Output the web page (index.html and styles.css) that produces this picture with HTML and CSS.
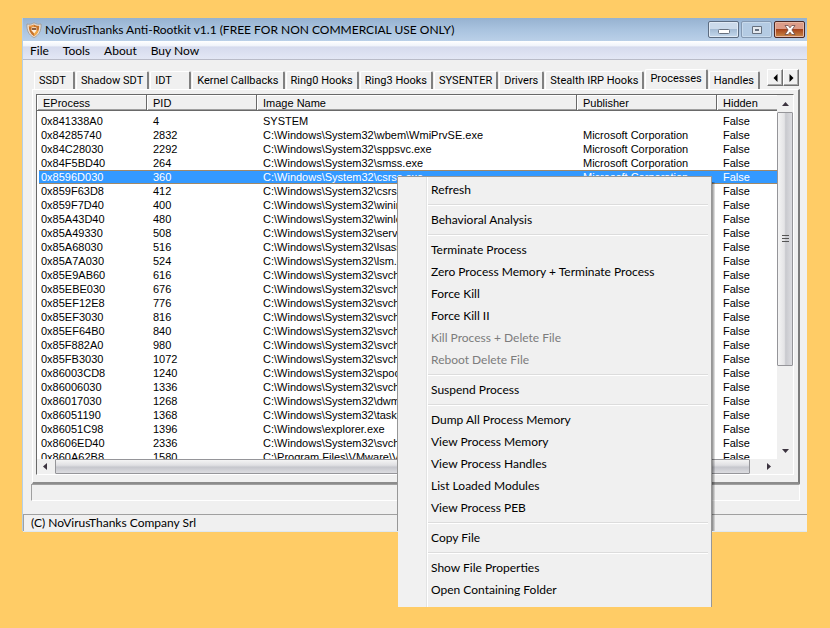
FILE: index.html
```html
<!DOCTYPE html>
<html lang="en">
<head>
    <meta charset="UTF-8">
    <title>NoVirusThanks Anti-Rootkit v1.1</title>
    <link rel="stylesheet" href="styles.css">
</head>
<body>
    <main class="window">
        <header class="titlebar">
            <svg class="app-icon" width="16" height="16" viewBox="0 0 16 16" aria-hidden="true">
                <path d="M8 0.8 C6 2.4 3.4 2.6 1 2 C0.6 8 2.4 12.8 8 15.6 C13.6 12.8 15.4 8 15 2 C12.6 2.6 10 2.4 8 0.8Z" fill="#ece4dc" stroke="#a09488" stroke-width="0.8"/>
                <path d="M8 2.6 C6.6 3.6 4.6 4 2.8 3.8 C2.6 8.4 4.2 11.8 8 14.2 C11.8 11.8 13.4 8.4 13.2 3.8 C11.4 4 9.4 3.6 8 2.6Z" fill="#c8742a"/>
                <path d="M8 8.5 H12.6 C11.8 11 10.6 12.8 8 14.2Z" fill="#f0a848"/>
                <path d="M2.8 3.8 C4.6 4 6.6 3.6 8 2.6 V5 H3Z" fill="#e89848"/>
                <path d="M5.6 5.2 H10.4 V8.6 L8.2 11.4 L5.6 8.6Z" fill="#fff0dc"/>
                <path d="M6 7H10" stroke="#6a3c20" stroke-width="1.6"/>
            </svg>
            <h1 class="title">NoVirusThanks Anti-Rootkit v1.1 (FREE FOR NON COMMERCIAL USE ONLY)</h1>
            <div class="window-buttons">
                <button class="win-btn" type="button" aria-label="Minimize">
                    <svg width="12" height="10" viewBox="0 0 12 10"><rect x="0.5" y="4.5" width="11" height="4" rx="1" fill="#fff" stroke="#66707e"/></svg>
                </button>
                <button class="win-btn win-btn-off" type="button" aria-label="Maximize" disabled>
                    <svg width="12" height="10" viewBox="0 0 12 10"><path d="M1.5 1.5H10.5V8.5H1.5Z" fill="#e4e9ef" stroke="#66707e"/><rect x="4.5" y="4.5" width="3" height="1" fill="#fff" stroke="#66707e"/></svg>
                </button>
                <button class="win-btn win-btn-close" type="button" aria-label="Close">
                    <svg width="12" height="10" viewBox="0 0 12 10"><path d="M1 0.5H4.2L6 2.8L7.8 0.5H11L7.9 5L11 9.5H7.8L6 7.2L4.2 9.5H1L4.1 5Z" fill="#fff" stroke="#6b4a48" stroke-width="0.8"/></svg>
                </button>
            </div>
        </header>

        <nav class="menubar">
            <button type="button">File</button>
            <button type="button">Tools</button>
            <button type="button">About</button>
            <button type="button">Buy Now</button>
        </nav>

        <div class="tabs">
            <div class="tab-list" role="tablist">
                <button class="tab" type="button" role="tab">SSDT</button>
                <button class="tab" type="button" role="tab">Shadow SDT</button>
                <button class="tab" type="button" role="tab">IDT</button>
                <button class="tab" type="button" role="tab">Kernel Callbacks</button>
                <button class="tab" type="button" role="tab">Ring0 Hooks</button>
                <button class="tab" type="button" role="tab">Ring3 Hooks</button>
                <button class="tab" type="button" role="tab">SYSENTER</button>
                <button class="tab" type="button" role="tab">Drivers</button>
                <button class="tab" type="button" role="tab">Stealth IRP Hooks</button>
                <button class="tab tab-active" type="button" role="tab" aria-selected="true">Processes</button>
                <button class="tab" type="button" role="tab">Handles</button>
            </div>
            <div class="tab-scroll">
                <button type="button" aria-label="Scroll tabs left"><svg width="5" height="8" viewBox="0 0 5 8"><path d="M4.5 0V8L0.5 4Z"/></svg></button>
                <button type="button" aria-label="Scroll tabs right"><svg width="5" height="8" viewBox="0 0 5 8"><path d="M0.5 0V8L4.5 4Z"/></svg></button>
            </div>
        </div>

        <section class="panel" role="tabpanel">
            <div class="list">
                <div class="list-view">
                    <table class="processes">
                        <colgroup>
                            <col class="col-eprocess">
                            <col class="col-pid">
                            <col class="col-image">
                            <col class="col-publisher">
                            <col class="col-hidden">
                        </colgroup>
                        <thead>
                            <tr><th>EProcess</th><th>PID</th><th>Image Name</th><th>Publisher</th><th>Hidden</th></tr>
                        </thead>
                        <tbody>
                            <tr><td>0x841338A0</td><td>4</td><td>SYSTEM</td><td></td><td>False</td></tr>
                            <tr><td>0x84285740</td><td>2832</td><td>C:\Windows\System32\wbem\WmiPrvSE.exe</td><td>Microsoft Corporation</td><td>False</td></tr>
                            <tr><td>0x84C28030</td><td>2292</td><td>C:\Windows\System32\sppsvc.exe</td><td>Microsoft Corporation</td><td>False</td></tr>
                            <tr><td>0x84F5BD40</td><td>264</td><td>C:\Windows\System32\smss.exe</td><td>Microsoft Corporation</td><td>False</td></tr>
                            <tr class="selected"><td>0x8596D030</td><td>360</td><td>C:\Windows\System32\csrss.exe</td><td>Microsoft Corporation</td><td>False</td></tr>
                            <tr><td>0x859F63D8</td><td>412</td><td>C:\Windows\System32\csrss.exe</td><td></td><td>False</td></tr>
                            <tr><td>0x859F7D40</td><td>400</td><td>C:\Windows\System32\wininit.exe</td><td></td><td>False</td></tr>
                            <tr><td>0x85A43D40</td><td>480</td><td>C:\Windows\System32\winlogon.exe</td><td></td><td>False</td></tr>
                            <tr><td>0x85A49330</td><td>508</td><td>C:\Windows\System32\services.exe</td><td></td><td>False</td></tr>
                            <tr><td>0x85A68030</td><td>516</td><td>C:\Windows\System32\lsass.exe</td><td></td><td>False</td></tr>
                            <tr><td>0x85A7A030</td><td>524</td><td>C:\Windows\System32\lsm.exe</td><td></td><td>False</td></tr>
                            <tr><td>0x85E9AB60</td><td>616</td><td>C:\Windows\System32\svchost.exe</td><td></td><td>False</td></tr>
                            <tr><td>0x85EBE030</td><td>676</td><td>C:\Windows\System32\svchost.exe</td><td></td><td>False</td></tr>
                            <tr><td>0x85EF12E8</td><td>776</td><td>C:\Windows\System32\svchost.exe</td><td></td><td>False</td></tr>
                            <tr><td>0x85EF3030</td><td>816</td><td>C:\Windows\System32\svchost.exe</td><td></td><td>False</td></tr>
                            <tr><td>0x85EF64B0</td><td>840</td><td>C:\Windows\System32\svchost.exe</td><td></td><td>False</td></tr>
                            <tr><td>0x85F882A0</td><td>980</td><td>C:\Windows\System32\svchost.exe</td><td></td><td>False</td></tr>
                            <tr><td>0x85FB3030</td><td>1072</td><td>C:\Windows\System32\svchost.exe</td><td></td><td>False</td></tr>
                            <tr><td>0x86003CD8</td><td>1240</td><td>C:\Windows\System32\spoolsv.exe</td><td></td><td>False</td></tr>
                            <tr><td>0x86006030</td><td>1336</td><td>C:\Windows\System32\svchost.exe</td><td></td><td>False</td></tr>
                            <tr><td>0x86017030</td><td>1268</td><td>C:\Windows\System32\dwm.exe</td><td></td><td>False</td></tr>
                            <tr><td>0x86051190</td><td>1368</td><td>C:\Windows\System32\taskhost.exe</td><td></td><td>False</td></tr>
                            <tr><td>0x86051C98</td><td>1396</td><td>C:\Windows\explorer.exe</td><td></td><td>False</td></tr>
                            <tr><td>0x8606ED40</td><td>2336</td><td>C:\Windows\System32\svchost.exe</td><td></td><td>False</td></tr>
                            <tr><td>0x860A62B8</td><td>1580</td><td>C:\Program Files\VMware\VMware Tools</td><td></td><td>False</td></tr>
                        </tbody>
                    </table>
                </div>
                <div class="scroll-v">
                    <button type="button" aria-label="Scroll up"><svg width="7" height="4" viewBox="0 0 7 4"><path d="M0 4H7L3.5 0Z"/></svg></button>
                    <div class="thumb-v"><svg width="7" height="8" viewBox="0 0 7 8"><path d="M0 0.5H7M0 3.5H7M0 6.5H7" stroke="#555"/></svg></div>
                    <button type="button" aria-label="Scroll down"><svg width="7" height="4" viewBox="0 0 7 4"><path d="M0 0H7L3.5 4Z"/></svg></button>
                </div>
                <div class="scroll-h">
                    <button type="button" aria-label="Scroll left"><svg width="4" height="7" viewBox="0 0 4 7"><path d="M4 0V7L0 3.5Z"/></svg></button>
                    <div class="thumb-h"></div>
                    <button type="button" aria-label="Scroll right"><svg width="4" height="7" viewBox="0 0 4 7"><path d="M0 0V7L4 3.5Z"/></svg></button>
                </div>
            </div>
        </section>

        <div class="progress"></div>

        <footer class="statusbar">(C) NoVirusThanks Company Srl</footer>
    </main>

    <div class="context-menu" role="menu">
        <button type="button" role="menuitem">Refresh</button>
        <hr>
        <button type="button" role="menuitem">Behavioral Analysis</button>
        <hr>
        <button type="button" role="menuitem">Terminate Process</button>
        <button type="button" role="menuitem">Zero Process Memory + Terminate Process</button>
        <button type="button" role="menuitem">Force Kill</button>
        <button type="button" role="menuitem">Force Kill II</button>
        <button type="button" role="menuitem" disabled>Kill Process + Delete File</button>
        <button type="button" role="menuitem" disabled>Reboot Delete File</button>
        <hr>
        <button type="button" role="menuitem">Suspend Process</button>
        <hr>
        <button type="button" role="menuitem">Dump All Process Memory</button>
        <button type="button" role="menuitem">View Process Memory</button>
        <button type="button" role="menuitem">View Process Handles</button>
        <button type="button" role="menuitem">List Loaded Modules</button>
        <button type="button" role="menuitem">View Process PEB</button>
        <hr>
        <button type="button" role="menuitem">Copy File</button>
        <hr>
        <button type="button" role="menuitem">Show File Properties</button>
        <button type="button" role="menuitem">Open Containing Folder</button>
    </div>
</body>
</html>
```
FILE: styles.css
```css
* {
    box-sizing: border-box;
}

body {
    margin: 0;
    padding: 18px 23px;
    background: #ffcc66;
    color: #000;
    font: 12px/16px Lato, "Open Sans", sans-serif;
}

button {
    margin: 0;
    padding: 0;
    border: 0;
    background: none;
    color: inherit;
    font: inherit;
}

.window {
    background: #f0f0f0;
    box-shadow: -1px 0 #b4cfe6, 0 1px #dfe8f0;
}

/* title bar */
.titlebar {
    display: flex;
    align-items: center;
    height: 23px;
    padding: 0 2px 0 3px;
    background: linear-gradient(#96b2d0, #a9c3df 50%, #bad0e8);
}

.title {
    flex: 1;
    margin: 0 0 0 3px;
    font-size: 12px;
    font-weight: normal;
    white-space: nowrap;
}

.window-buttons {
    display: flex;
    gap: 2px;
}

.win-btn {
    display: flex;
    align-items: center;
    justify-content: center;
    width: 31px;
    height: 17px;
    border: 1px solid #5c6c80;
    border-radius: 2px;
    background: linear-gradient(#cbdaea 50%, #a5bcd4 50%, #c4d8ec);
    box-shadow: inset 0 0 0 1px #e0eaf5;
}

.win-btn-off {
    border-color: #8498b0;
    background: #b4cbe3;
    box-shadow: inset 0 0 0 1px #c8daec;
}

.win-btn-close {
    border-color: #4b2824;
    background: linear-gradient(#dc9c88 50%, #a8441c 50%, #c98a48);
    box-shadow: inset 0 0 0 1px #e8b8a4;
}

/* menu bar */
.menubar {
    display: flex;
    gap: 14px;
    height: 19px;
    padding: 2px 7px 0;
    border-bottom: 1px solid #b9bbc8;
    background: linear-gradient(#fff, #eef2fa 30%, #d5daed 31%, #e3e7f5);
}

/* tabs */
.tabs {
    display: flex;
    justify-content: space-between;
    padding: 9px 8px 0 11px;
    font: 11px/14px Roboto, "Liberation Sans", sans-serif;
}

.tab-list {
    display: flex;
    align-items: flex-end;
    gap: 1px;
}

.tab {
    min-width: 41px;
    height: 18px;
    padding: 1px 4px 0;
    border: 1px solid #fff;
    border-right: 2px solid #808080;
    border-bottom: 0;
    border-radius: 2px 2px 0 0;
    text-align: left;
    white-space: nowrap;
}

.tab-active {
    height: 20px;
    padding-bottom: 3px;
}

.tab-scroll {
    display: flex;
    height: 17px;
}

.tab-scroll button {
    display: flex;
    align-items: center;
    justify-content: center;
    width: 16px;
    border: 1px solid;
    border-color: #fff #707070 #707070 #fff;
    box-shadow: inset -1px -1px #a8a8a8;
}

/* process list */
.panel {
    margin: 0 7px 0 9px;
    padding: 4px 4px 7px 3px;
    border: 1px solid #fff;
    border-right: 2px solid #7c7c7c;
    border-bottom: 2px solid #8c8c8c;
}

.list {
    display: grid;
    grid-template-columns: 1fr 16px;
    border: 1px solid;
    border-color: #696969 #fff #fff #696969;
    font: 11px/14px "Liberation Sans", Arial, sans-serif;
}

.list-view {
    height: 364px;
    overflow: hidden;
    background: #fff;
}

.processes {
    width: 100%;
    border-spacing: 0;
    table-layout: fixed;
}

.col-eprocess {
    width: 110px;
}

.col-pid {
    width: 110px;
}

.col-publisher {
    width: 140px;
}

.col-hidden {
    width: 60px;
}

.processes th {
    height: 16px;
    padding: 0 6px;
    border-right: 1px solid #696969;
    border-bottom: 1px solid #696969;
    background: #f0f0f0;
    box-shadow: inset 1px 1px #fff, inset 0 -1px #a0a0a0;
    font-weight: normal;
    text-align: left;
}

.processes th:last-child {
    border-right: 0;
}

.processes tbody::before {
    content: "";
    display: block;
    height: 3px;
}

.processes td {
    height: 14px;
    padding: 0 6px;
    overflow: hidden;
    white-space: nowrap;
}

.processes td:first-child {
    padding-left: 4px;
}

.selected td {
    background: #3399ff;
    box-shadow: inset 0 1px #a08868, inset 0 -1px #a08868;
    color: #fff;
}

.selected td:first-child {
    border-left: 2px solid #fff;
    padding-left: 2px;
}

/* scroll bars */
.scroll-v,
.scroll-h {
    display: flex;
    background: #f0f0f0;
}

.scroll-v {
    flex-direction: column;
}

.scroll-v button,
.scroll-h button {
    display: flex;
    flex: none;
    align-items: center;
    justify-content: center;
    width: 16px;
    height: 17px;
    fill: #3c3440;
}

.scroll-h button {
    height: 15px;
}

.thumb-v,
.thumb-h {
    border: 1px solid #959599;
    border-radius: 1px;
}

.thumb-v {
    display: flex;
    flex: none;
    align-items: center;
    justify-content: center;
    height: 254px;
    margin-bottom: auto;
    background: linear-gradient(90deg, #f4f4f4, #e4e4e6 45%, #c8c9ce 55%, #dcdce0);
}

.thumb-h {
    flex: 1;
    height: 15px;
    margin: 0 11px 0 2px;
    background: linear-gradient(#f4f4f4, #e0e0e3 40%, #c6c7cd 55%, #dcdce0);
}

.progress {
    height: 17px;
    margin: 0 7px 0 8px;
    border: 1px solid;
    border-color: #a0a0a0 #fff #fff #a0a0a0;
}

.statusbar {
    height: 17px;
    margin-top: 13px;
    padding-left: 7px;
    border-top: 1px solid #a0a0a0;
    border-left: 1px solid #a0a0a0;
}

/* context menu */
.context-menu {
    position: absolute;
    top: 176px;
    left: 398px;
    width: 314px;
    padding: 2px 3px 6px 0;
    border-top: 1px solid #979797;
    border-right: 1px solid #979797;
    background: linear-gradient(90deg, #f1f1f1 28px, #e2e3e3 28px, #e2e3e3 29px, #fff 29px, #fff 30px, #f0f0f0 30px);
}

/* left edge and drop shadow, drawn only above the window */
.context-menu::before,
.context-menu::after {
    content: "";
    position: absolute;
}

.context-menu::before {
    top: 0;
    left: -1px;
    width: 1px;
    height: 354px;
    background: #979797;
}

.context-menu::after {
    top: 5px;
    right: -4px;
    width: 3px;
    height: 349px;
    background: linear-gradient(90deg, rgba(0, 0, 0, 0.45), rgba(0, 0, 0, 0.08));
}

.context-menu button {
    display: block;
    width: 100%;
    height: 22px;
    padding-left: 33px;
    text-align: left;
}

.context-menu button:disabled {
    color: #7c7c7c;
}

.context-menu hr {
    height: 2px;
    margin: 3px 0 3px 30px;
    border: 0;
    border-top: 1px solid #dcdcdc;
    background: #fff;
}
```
